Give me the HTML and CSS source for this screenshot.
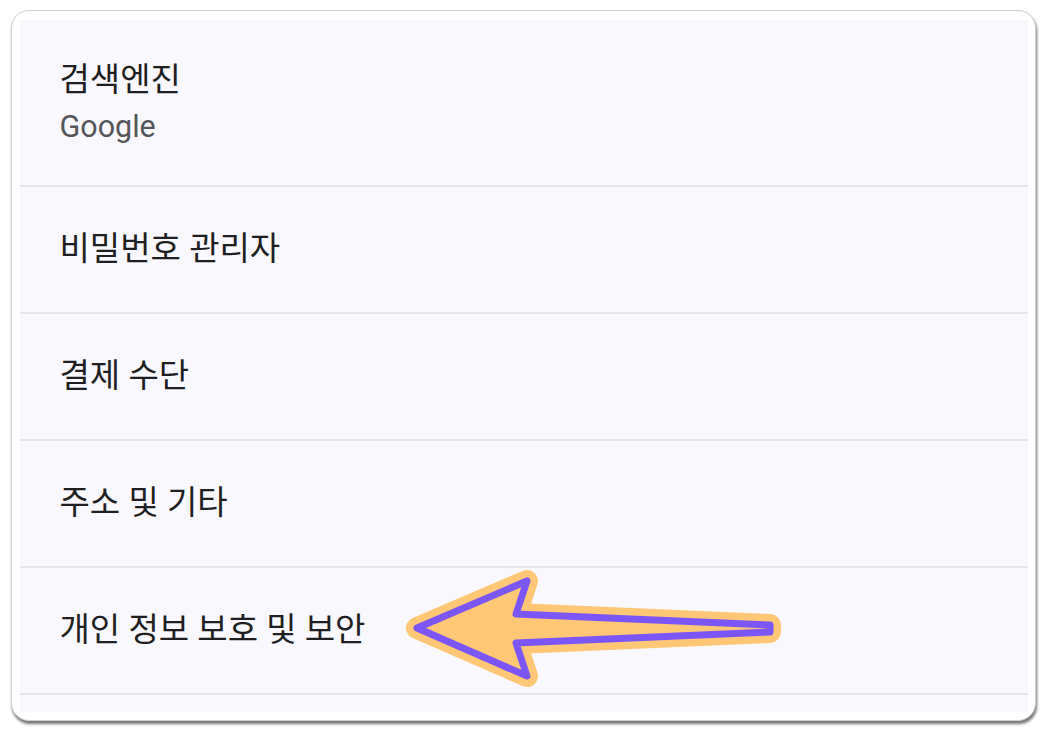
FILE: index.html
```html
<!DOCTYPE html>
<html lang="ko">
<head>
<meta charset="utf-8">
<link rel="stylesheet" href="styles.css">
</head>
<body>
<div class="frame">
  <div class="list">
    <div class="row row-first">
      <div class="title">검색엔진</div>
      <div class="sub">Google</div>
    </div>
    <div class="row"><div class="title">비밀번호 관리자</div></div>
    <div class="row"><div class="title">결제 수단</div></div>
    <div class="row"><div class="title">주소 및 기타</div></div>
    <div class="row"><div class="title">개인 정보 보호 및 보안</div></div>
  </div>
</div>
<svg class="arrow" width="1048" height="733" viewBox="0 0 1048 733">
  <polygon points="417,628 527,581 516,614 770,625 770,632 516,643 527,676" fill="#fdc776" stroke="#fdc776" stroke-width="22" stroke-linejoin="round"/>
  <polygon points="417,628 527,581 516,614 770,625 770,632 516,643 527,676" fill="#fdc776" stroke="#7b55f6" stroke-width="7" stroke-linejoin="round"/>
</svg>
</body>
</html>
```
FILE: styles.css
```css
html, body {
  margin: 0;
  padding: 0;
  background: #ffffff;
}
body {
  padding: 10px 12px 0 11px;
  width: 1048px;
  height: 733px;
  box-sizing: border-box;
  font-family: Roboto, "Noto Sans CJK KR", sans-serif;
}
.frame {
  width: 1025px;
  height: 711px;
  box-sizing: border-box;
  background: #ffffff;
  border: 1.5px solid #cfcfcf;
  border-radius: 18px;
  box-shadow: 1px 3px 3px rgba(0, 0, 0, 0.55);
  padding: 8.5px 7.5px;
}
.list {
  background: #f9f9fd;
  height: 692px;
  overflow: hidden;
}
.row {
  height: 127px;
  box-sizing: border-box;
  border-bottom: 2px solid #e4e3ea;
  padding-left: 40px;
  display: flex;
  flex-direction: column;
  justify-content: center;
}
.row-first {
  height: 167px;
  justify-content: flex-start;
  padding-top: 40px;
}
.title {
  font-size: 33px;
  line-height: 40px;
  color: #1f1f22;
}
.sub {
  font-size: 30.5px;
  line-height: 40px;
  margin-top: 7px;
  color: #55565a;
}
.arrow {
  position: absolute;
  left: 0;
  top: 0;
}
```
